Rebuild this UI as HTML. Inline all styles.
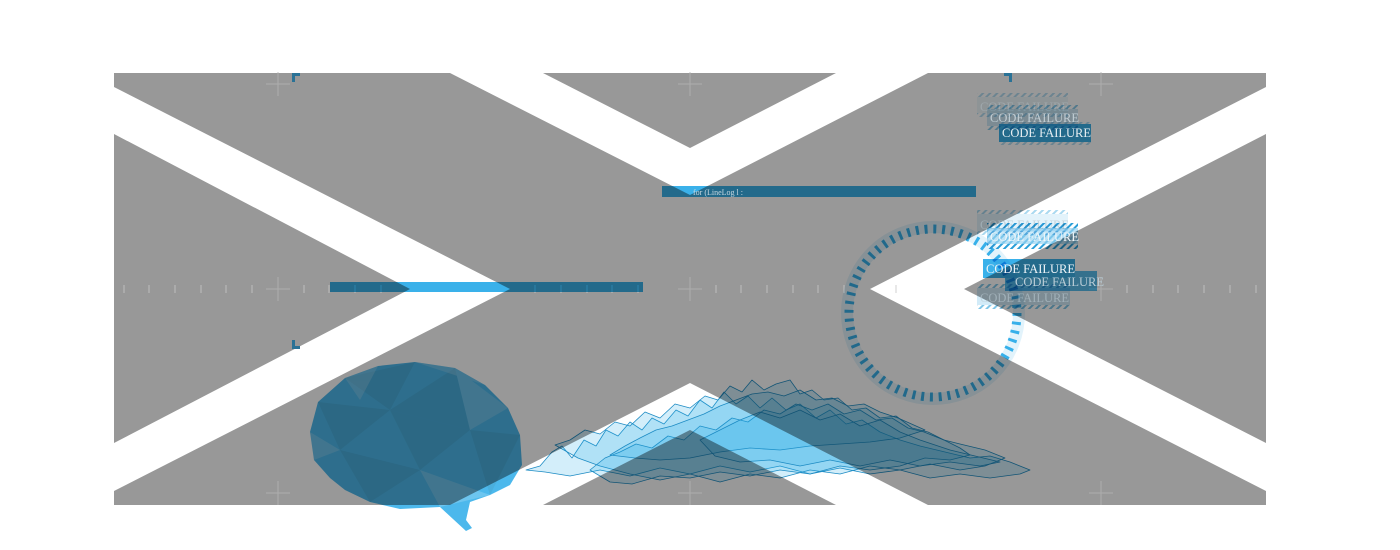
<!DOCTYPE html>
<html><head><meta charset="utf-8"><style>
html,body{margin:0;padding:0;background:#fff;width:1400px;height:550px;overflow:hidden}
svg{display:block}
.m{mix-blend-mode:multiply}
text{font-family:"Liberation Serif",serif}
</style></head><body>
<svg width="1400" height="550" viewBox="0 0 1400 550" xmlns="http://www.w3.org/2000/svg">
<defs>
<pattern id="h" width="5" height="5" patternUnits="userSpaceOnUse" patternTransform="rotate(45)">
<rect width="2" height="5" fill="#2a9fd8"/>
</pattern>
</defs>
<rect x="114" y="73" width="1152" height="432" fill="#989898"/>
<g fill="#fff">
<polygon points="114,87 510,289 114,491 114,443 410,289 114,134"/>
<polygon points="1266,87 870,289 1266,491 1266,443 964,289 1266,134"/>
<polygon points="450,73 543,73 690,148 836,73 928,73 690,195"/>
<polygon points="450,505 543,505 690,430 836,505 928,505 690,383"/>
</g>
<g stroke="#b4b4b4" stroke-width="1" opacity="0.8">
<path d="M266,84h24M278,72v24M678,84h24M690,72v24M1089,84h24M1101,72v24M266,289h24M278,277v24M678,289h24M690,277v24M1089,289h24M1101,277v24M266,493h24M278,481v24M678,493h24M690,481v24M1089,493h24M1101,481v24"/>
</g>
<g stroke="#c8c8c8" stroke-width="1" opacity="0.8">
<path d="M124,285v8M149,285v8M175,285v8M201,285v8M226,285v8M252,285v8M304,285v8M329,285v8M355,285v8M381,285v8M535,285v8M561,285v8M587,285v8M612,285v8M638,285v8M716,285v8M741,285v8M767,285v8M793,285v8M818,285v8M844,285v8M896,285v8M1127,285v8M1153,285v8M1178,285v8M1204,285v8M1230,285v8M1256,285v8"/>
</g>
<g fill="#2a7296">
<path d="M292,73h8v3h-5v6h-3z"/>
<path d="M1004,73h8v9h-3v-6h-5z"/>
<path d="M292,340h3v6h5v3h-8z"/>
</g>
<g class="m" opacity="0.9">
<rect x="330" y="282" width="313" height="10" fill="#24a9e8"/>
<rect x="662" y="186" width="314" height="11" fill="#24a9e8"/>
</g>
<text x="693" y="195" font-size="8" fill="#c8d8e0">for (LineLog l :</text>
<g class="m">
<circle cx="933" cy="313" r="86" fill="none" stroke="#bfe4f6" stroke-width="12" opacity="0.45"/>
<circle cx="933" cy="313" r="84" fill="none" stroke="#24a9e8" stroke-width="9" stroke-dasharray="3 5.8" opacity="0.9"/>
</g>
<g font-size="12.5">
<g class="m" opacity="0.35"><rect x="977" y="93" width="91" height="24" fill="url(#h)"/><rect x="977" y="97" width="91" height="16" fill="#cde9f6"/></g>
<text x="980" y="111" fill="#aab4ba" opacity="0.6">CODE FAILURE</text>
<g class="m" opacity="0.55"><rect x="987" y="105" width="91" height="25" fill="url(#h)"/><rect x="987" y="109" width="91" height="17" fill="#a9d8ef"/></g>
<text x="990" y="122" fill="#d0dde4" opacity="0.8">CODE FAILURE</text>
<g class="m" opacity="0.9"><rect x="999" y="122" width="92" height="23" fill="url(#h)" opacity="0.4"/><rect x="999" y="124" width="92" height="18" fill="#24a9e8"/></g>
<text x="1002" y="137" fill="#e6eef2">CODE FAILURE</text>
<g class="m" opacity="0.4"><rect x="977" y="210" width="91" height="25" fill="url(#h)"/><rect x="977" y="214" width="91" height="17" fill="#b9e1f5"/></g>
<text x="980" y="229" fill="#b0c0c8" opacity="0.6">CODE FAILURE</text>
<g class="m"><rect x="987" y="223" width="91" height="26" fill="url(#h)"/><rect x="987" y="228" width="91" height="16" fill="#9dd6f2" opacity="0.7"/></g>
<text x="990" y="241" fill="#eef6fa">CODE FAILURE</text>
<g class="m" opacity="0.6"><rect x="977" y="284" width="93" height="25" fill="url(#h)"/><rect x="977" y="288" width="93" height="17" fill="#b4def4"/></g>
<text x="980" y="302" fill="#b8c8d0" opacity="0.6">CODE FAILURE</text>
<g class="m" opacity="0.9"><rect x="983" y="259" width="92" height="19" fill="#24a9e8"/><rect x="1005" y="271" width="92" height="20" fill="#24a9e8" opacity="0.85"/></g>
<text x="986" y="273" fill="#eef4f8">CODE FAILURE</text>
<text x="1015" y="286" fill="#b9ccd6">CODE FAILURE</text>
</g>
<!-- brain -->
<g class="m" opacity="0.82">
<polygon points="310,432 318,402 345,378 378,366 415,362 455,368 485,385 508,408 520,435 522,465 510,485 490,495 470,502 466,520 472,528 466,531 440,507 400,509 370,502 345,490 330,478 314,460" fill="#24a9e8"/>
<g fill="#1d6f97" opacity="0.2">
<polygon points="345,378 415,362 390,410"/>
<polygon points="390,410 455,368 470,430"/>
<polygon points="318,402 390,410 340,450"/>
<polygon points="390,410 470,430 420,470"/>
<polygon points="470,430 520,435 490,495"/>
<polygon points="340,450 420,470 370,502"/>
</g>
<g fill="#ffffff" opacity="0.18">
<polygon points="415,362 485,385 455,368"/>
<polygon points="455,368 508,408 470,430"/>
<polygon points="310,432 340,450 314,460"/>
<polygon points="420,470 490,495 440,507"/>
<polygon points="378,366 345,378 360,400"/>
</g>
</g>
<!-- waves -->
<g class="m" stroke="#1e8cc4" stroke-width="0.8" fill="#24a9e8" fill-opacity="0.2" stroke-linejoin="round">
<path d="M526,470 L540,466 552,452 562,446 572,458 584,440 596,446 606,430 618,436 630,422 642,430 652,418 664,424 676,410 688,416 700,400 712,408 724,392 736,404 748,396 760,408 772,398 786,410 800,404 816,418 830,410 846,424 862,420 880,432 900,440 920,446 945,452 970,458 990,456 1010,462 1030,470 1020,474 990,478 960,474 930,478 900,470 870,474 840,468 810,474 780,466 750,472 720,466 690,474 660,468 630,476 600,470 570,476 545,472Z"/>
<path d="M555,445 L570,440 585,430 600,434 615,422 630,426 645,412 660,418 675,404 690,408 705,396 718,400 730,386 742,392 752,380 764,390 776,384 790,380 800,394 812,390 824,400 838,398 852,410 866,408 880,418 896,416 912,428 928,432 944,440 960,444 985,450 1005,458 985,466 960,470 930,464 900,470 870,466 840,474 810,470 780,478 750,474 720,482 690,474 660,480 630,474 600,466 578,458Z"/>
<path d="M590,470 L605,458 620,452 636,444 652,448 668,436 684,440 700,426 716,430 732,418 748,422 764,410 780,414 796,404 812,410 828,404 844,414 860,410 876,420 892,418 908,428 924,432 944,440 960,448 970,455 950,460 925,458 900,466 870,470 840,466 810,474 780,470 750,476 720,472 690,478 660,476 632,484 610,482Z"/>
<path d="M610,455 L625,446 640,438 656,430 672,426 688,420 704,414 720,406 736,400 752,394 768,392 784,396 800,390 816,400 832,398 848,406 864,404 880,412 898,418 925,430 900,438 870,442 840,444 810,446 780,450 750,448 720,452 690,458 660,460 635,458Z"/>
<path d="M700,440 L720,430 740,420 760,412 780,418 800,410 820,420 840,414 860,426 880,420 900,432 920,440 950,450 975,456 1000,462 980,466 950,462 920,466 890,460 860,466 830,460 800,466 770,460 740,462 715,456Z"/>
</g>
</svg>
</body></html>
